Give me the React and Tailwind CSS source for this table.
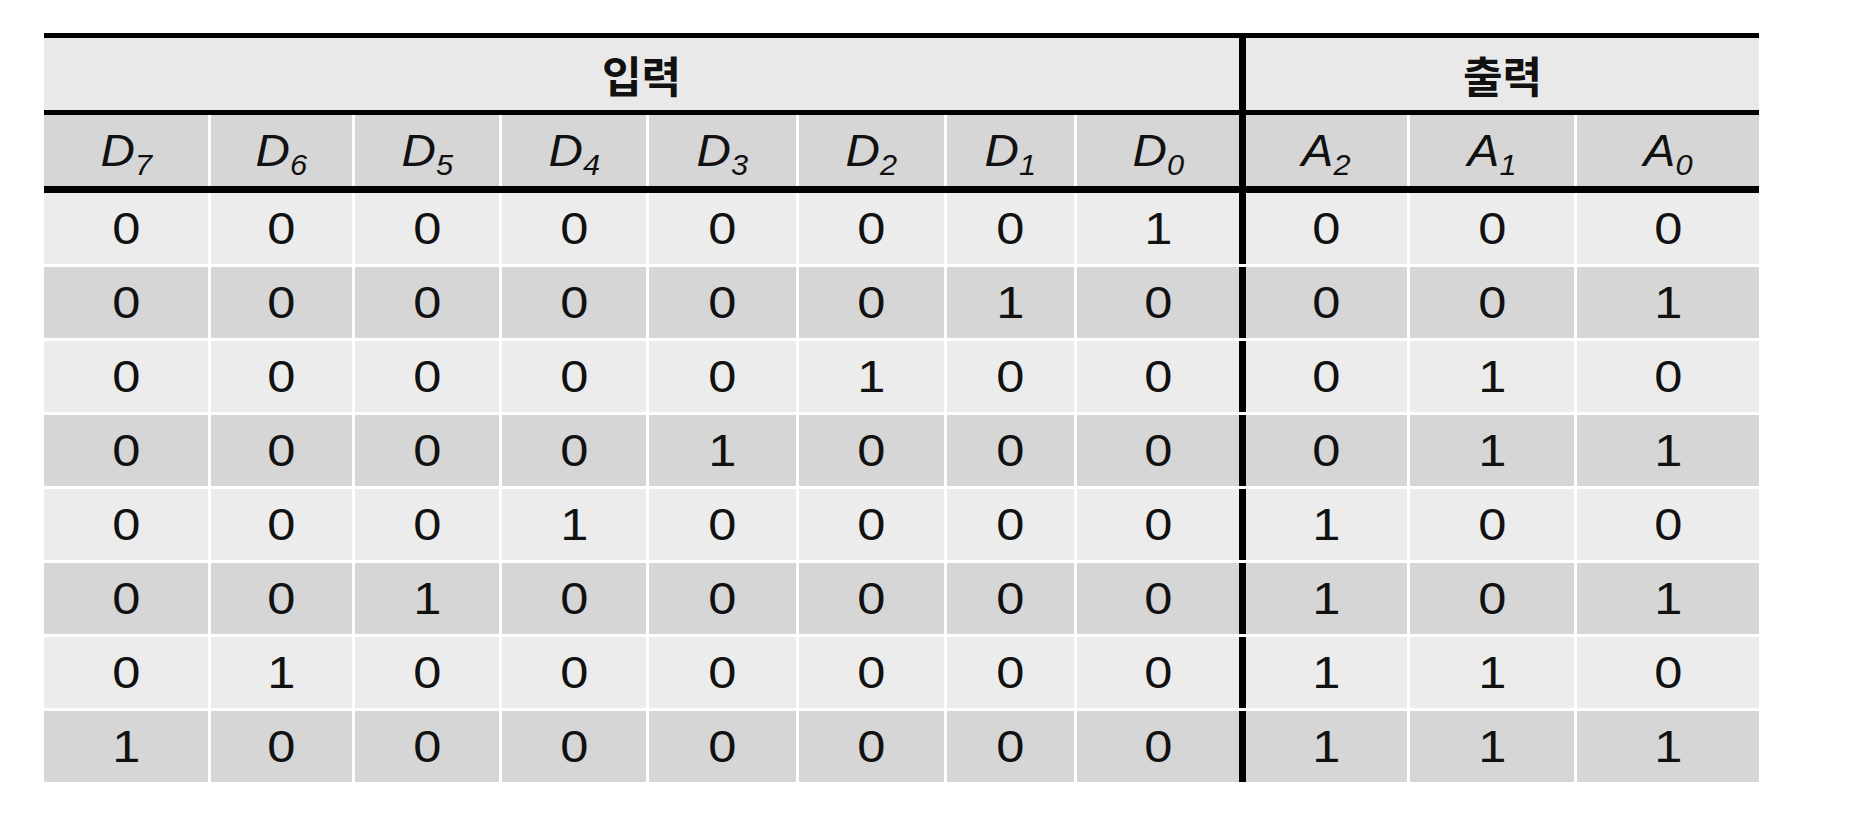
const inCols = ['w-[164px]', 'w-[141px]', 'w-[144px]', 'w-[144px]', 'w-[147px]', 'w-[145px]', 'w-[127px]', 'w-[162px]']
const outCols = ['w-[161px]', 'w-[164px]', 'flex-1']

const inHeads = ['7', '6', '5', '4', '3', '2', '1', '0']
const outHeads = ['2', '1', '0']

// one-hot input row i -> binary code of i
const rows = Array.from({ length: 8 }, (_, i) => ({
  inputs: inHeads.map((n) => (Number(n) === i ? 1 : 0)),
  outputs: [(i >> 2) & 1, (i >> 1) & 1, i & 1],
}))

function Sym({ letter, sub }) {
  return (
    <span className="italic text-[45px] leading-none scale-x-[1.06] font-['Liberation_Sans',Arial,sans-serif]">
      {letter}
      <span className="relative top-[9px] text-[29px]">{sub}</span>
    </span>
  )
}

function Cell({ w, bg, children }) {
  return (
    <div className={`${w} ${bg} flex items-center justify-center`}>
      {children}
    </div>
  )
}

export default function App() {
  return (
    <div className="w-[1850px] h-[822px] bg-white pt-[33px] pl-[44px] text-[#111] font-['Liberation_Sans',Arial,sans-serif]">
      <div className="w-[1715px]">
        <div className="h-[5px] bg-black" />

        <div className="flex h-[72px]">
          <div className="w-[1195px] bg-[#e9e9e9] flex items-center justify-center">
            <span className="text-[43px] font-bold leading-none font-['Noto_Sans_CJK_KR',sans-serif]">입력</span>
          </div>
          <div className="w-[7px] bg-black" />
          <div className="flex-1 bg-[#e9e9e9] flex items-center justify-center">
            <span className="text-[43px] font-bold leading-none font-['Noto_Sans_CJK_KR',sans-serif]">출력</span>
          </div>
        </div>

        <div className="h-[5px] bg-black" />

        <div className="flex h-[71px]">
          <div className="flex gap-[3px] w-[1195px]">
            {inHeads.map((n, i) => (
              <Cell key={n} w={inCols[i]} bg="bg-[#d6d6d6]">
                <Sym letter="D" sub={n} />
              </Cell>
            ))}
          </div>
          <div className="w-[7px] bg-black" />
          <div className="flex gap-[3px] flex-1">
            {outHeads.map((n, i) => (
              <Cell key={n} w={outCols[i]} bg="bg-[#d6d6d6]">
                <Sym letter="A" sub={n} />
              </Cell>
            ))}
          </div>
        </div>

        <div className="h-[7px] bg-black" />

        <div className="flex flex-col gap-[3px]">
          {rows.map((r, ri) => {
            const bg = ri % 2 === 0 ? 'bg-[#ececec]' : 'bg-[#d6d6d6]'
            return (
              <div key={ri} className="flex h-[71px] text-[44px] leading-none">
                <div className="flex gap-[3px] w-[1195px]">
                  {r.inputs.map((v, i) => (
                    <Cell key={i} w={inCols[i]} bg={bg}>
                      <span className="scale-x-[1.15]">{v}</span>
                    </Cell>
                  ))}
                </div>
                <div className="w-[7px] bg-black" />
                <div className="flex gap-[3px] flex-1">
                  {r.outputs.map((v, i) => (
                    <Cell key={i} w={outCols[i]} bg={bg}>
                      <span className="scale-x-[1.15]">{v}</span>
                    </Cell>
                  ))}
                </div>
              </div>
            )
          })}
        </div>
      </div>
    </div>
  )
}
